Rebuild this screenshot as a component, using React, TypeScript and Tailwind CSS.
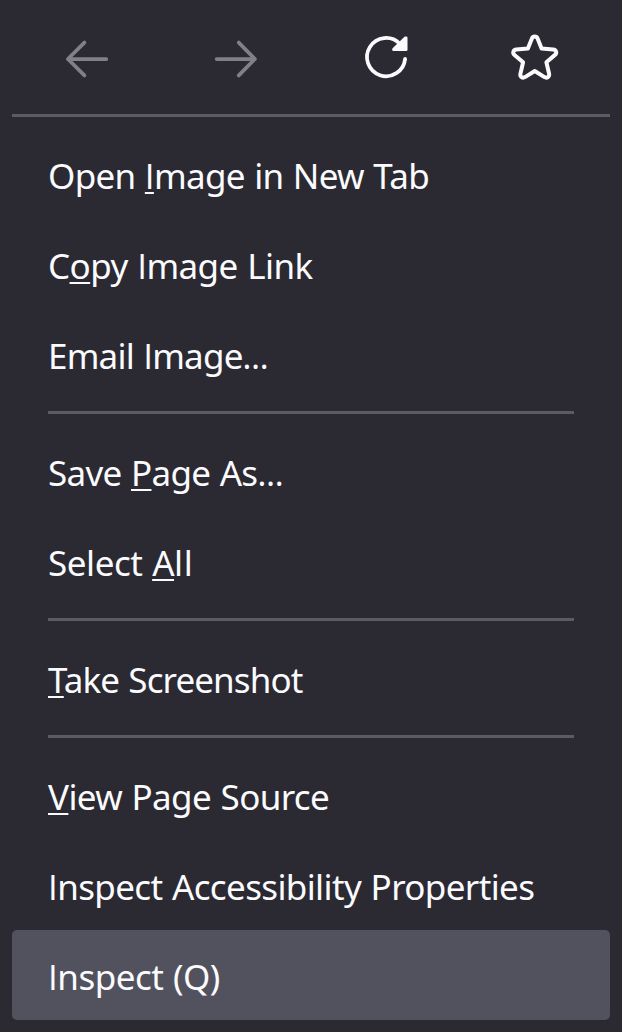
import type { ReactNode } from "react";

/* Capital I is set in Open Sans, whose I has no serifs; the ellipsis is drawn a little tighter. */
function Glyphs({ text }: { text: string }) {
  return (
    <>
      {text.split(/(I|…)/).map((part, i) => {
        if (part === "I") return <span key={i} className="font-['Open_Sans']">I</span>;
        if (part === "…") return <span key={i} className="text-[33px]">…</span>;
        return part;
      })}
    </>
  );
}

type ItemProps = {
  before?: string;
  accessKey?: string;
  after?: string;
  tracking?: string;
  tail?: string;
  active?: boolean;
};

function Item({ before = "", accessKey = "", after = "", tracking = "tracking-[-0.63px]", tail = "", active = false }: ItemProps) {
  return (
    <button
      className={`flex h-[90px] w-full shrink-0 items-center rounded-[5px] px-9 pt-1 text-left text-[35px] leading-[48px] whitespace-pre [word-spacing:1px] ${active ? "bg-[#52525e]" : ""}`}
    >
      <span className={tracking}>
        <Glyphs text={before} />
        {accessKey && (
          <span className="underline decoration-2 underline-offset-[3px] [text-decoration-skip-ink:none]">
            <Glyphs text={accessKey} />
          </span>
        )}
        <span className={tail}>
          <Glyphs text={after} />
        </span>
      </span>
    </button>
  );
}

function Separator() {
  return <div className="mx-9 my-3 h-[3px] shrink-0 bg-[#5b5b66]" />;
}

function IconButton({ label, dim = false, children }: { label: string; dim?: boolean; children: ReactNode }) {
  return (
    <button aria-label={label} className={`flex flex-1 items-center justify-center ${dim ? "text-[#808086]" : ""}`}>
      <svg
        className="size-12 overflow-visible"
        viewBox="0 0 48 48"
        fill="none"
        stroke="currentColor"
        strokeWidth="3.75"
        strokeLinecap="round"
        strokeLinejoin="round"
      >
        {children}
      </svg>
    </button>
  );
}

export default function App() {
  return (
    <div className="flex h-[1032px] w-[622px] flex-col bg-[#2b2a33] px-3 py-3 font-['Noto_Sans',sans-serif] text-[#fbfbfe]">
      <div className="flex h-[90px] shrink-0">
        <IconButton label="Back" dim>
          <path d="M43.3 26H4.9M21.4 9.6 4.9 26l16.5 16.4" />
        </IconButton>
        <IconButton label="Forward" dim>
          <path d="M4.7 26h38.2M26.8 9.6 42.9 26 26.8 42.4" />
        </IconButton>
        <IconButton label="Reload">
          <path d="M43.1 26A19.1 19.1 0 1 1 37.7 10.7" strokeLinecap="butt" />
          <circle cx="43.1" cy="25.9" r="1.87" fill="currentColor" stroke="none" />
          <path d="M43.4 4.8H44.2V16.7H31.5V16.3Z" fill="currentColor" strokeWidth="2.6" />
        </IconButton>
        <IconButton label="Bookmark">
          <path
            strokeWidth="4"
            d="M20.9 5.6C22 2.9 25.5 2.9 26.6 5.6L30.6 15.6 42.2 16.5C45.2 16.8 46.3 20 44 21.9L35.4 29.3 38.1 40.8C38.7 43.6 36 45.5 33.5 44.1L23.75 38 14 44.1C11.5 45.5 8.8 43.6 9.4 40.8L12.1 29.3 3.5 21.9C1.2 20 2.3 16.8 5.3 16.5L16.9 15.6Z"
          />
        </IconButton>
      </div>
      <div className="my-3 h-[3px] shrink-0 bg-[#5b5b66]" />
      <Item before="Open " accessKey="I" after="mage in New Tab" tracking="tracking-[-0.7px]" />
      <Item before="C" accessKey="o" after="py Image Link" tracking="tracking-[-0.58px]" />
      <Item before="Email Image…" tracking="tracking-[-0.8px]" />
      <Separator />
      <Item before="Save " accessKey="P" after="age As…" tracking="tracking-[-0.7px]" />
      <Item before="Select " accessKey="A" after="ll" tracking="tracking-[-0.45px]" tail="tracking-[0.7px]" />
      <Separator />
      <Item accessKey="T" after="ake Screenshot" tracking="tracking-[-0.9px]" />
      <Separator />
      <Item accessKey="V" after="iew Page Source" />
      <Item before="Inspect Accessibility Properties" />
      <Item before="Inspect (Q)" tracking="tracking-[-0.5px]" active />
    </div>
  );
}
